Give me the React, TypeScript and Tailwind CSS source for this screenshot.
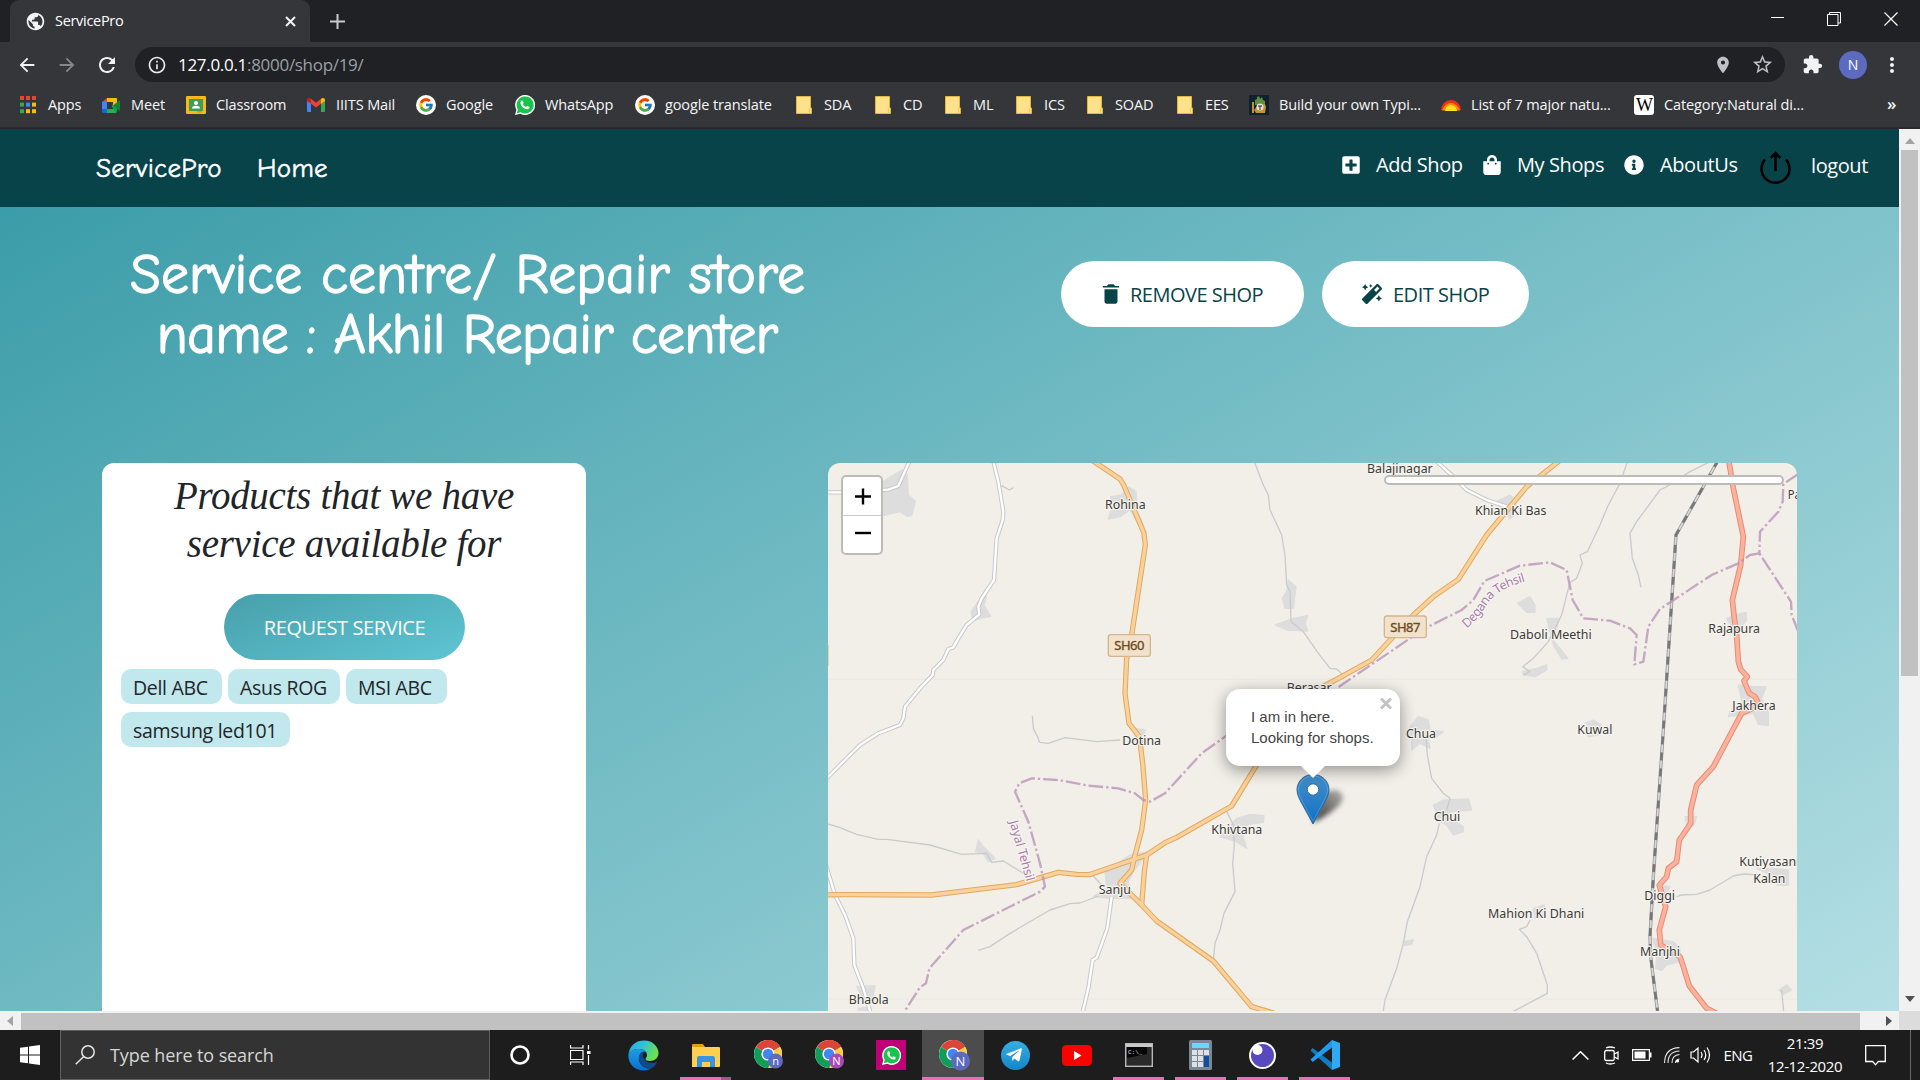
import React from "react";
import {
  MdArrowBack,
  MdArrowForward,
  MdRefresh,
  MdInfoOutline,
  MdPlace,
  MdStarBorder,
  MdExtension,
  MdMoreVert,
  MdPublic,
} from "react-icons/md";
import { FaPlusSquare, FaShoppingBag, FaInfoCircle, FaMagic, FaTelegramPlane } from "react-icons/fa";
import { IoMdTrash } from "react-icons/io";
import { FcGoogle } from "react-icons/fc";

/* ---------- Browser icons ---------- */

const AppsIcon = () => (
  <svg width="16" height="18" viewBox="0 0 16 18">
    {["#ea4335", "#ea4335", "#ea4335", "#34a853", "#4285f4", "#fbbc04", "#34a853", "#fbbc04", "#fbbc04"].map((c, i) => (
      <rect key={i} x={(i % 3) * 6} y={Math.floor(i / 3) * 6.6} width="4" height="4" fill={c} />
    ))}
  </svg>
);
const MeetIcon = () => (
  <svg width="20" height="20" viewBox="0 0 20 20">
    <path d="M1 7l5-4v4z" fill="#ea4335" />
    <path d="M6 3h9v4H6z" fill="#fbbc04" />
    <path d="M1 7h5v7H1z" fill="#4285f4" />
    <path d="M1 14h5v4H2.500q-1.500 0-1.500-1.500z" fill="#1967d2" />
    <path d="M6 14h9v4H6z" fill="#34a853" />
    <path d="M15 3q1 0 1 1v12q0 2-1 2l-4-6v-2l4-3z" fill="#00ac47" />
    <path d="M15 3q1 0 1 1v5l-4 2V7h3z" fill="#fbbc04" />
    <path d="M12 10.500l7-5.500v11z" fill="#188038" />
  </svg>
);
const ClassroomIcon = () => (
  <svg width="20" height="18" viewBox="0 0 20 18">
    <rect width="20" height="18" rx="1" fill="#f5ba15" />
    <rect x="3" y="3" width="14" height="12" fill="#3f9c5a" />
    <circle cx="10" cy="7" r="2" fill="#fff" />
    <path d="M6 12.500q0-2.700 4-2.700t4 2.700z" fill="#fff" />
    <rect x="11" y="15" width="5" height="1.500" fill="#d89c10" />
  </svg>
);
const GmailIcon = () => (
  <svg width="18" height="14" viewBox="0 0 18 14">
    <path d="M0 2v11q0 1 1 1h3V5z" fill="#4285f4" />
    <path d="M18 2v11q0 1-1 1h-3V5z" fill="#34a853" />
    <path d="M4 0.800l5 3.900 5-3.900v5L9 9.600 4 5.800z" fill="#ea4335" />
    <path d="M4 0.800v5L0 3V2q0-2 2-2 1 0 2 .8z" fill="#c5221f" />
    <path d="M14 0.800v5L18 3V2q0-2-2-2-1 0-2 .8z" fill="#fbbc04" />
  </svg>
);
const GoogleIcon = () => (
  <span className="flex size-5 items-center justify-center rounded-full bg-white">
    <FcGoogle size={16} />
  </span>
);
const WhatsAppIcon = ({ size = 20 }: { size?: number }) => (
  <svg width={size} height={size} viewBox="0 0 20 20">
    <path d="M0 20l1.400-5.200A10 10 0 1 1 5.300 18.700z" fill="#fff" />
    <path d="M1.800 18.200l1.100-3.800A8.500 8.500 0 1 1 5.700 17.200z" fill="#18c44c" />
    <path d="M6.200 5.700q.9-.9 1.500 0l.9 1.800q.1.500-.8 1.400 1.200 2.200 3.300 3.100l1.100-1.200 2.200 1.100q.5 1.300-1.200 2.200-1.800.8-4.700-1.100Q5.600 10.800 5.400 8q0-1.400.8-2.300z" fill="#fff" />
  </svg>
);
const FolderIcon = () => (
  <svg width="16" height="18" viewBox="0 0 16 18">
    <path d="M0.500 0.500h14V12h1v5.500H.5z" fill="#fde28b" stroke="#e0b93c" />
    <path d="M13.500 12.500v5" stroke="#f5c842" />
  </svg>
);
const TypingIcon = () => (
  <svg width="20" height="20" viewBox="0 0 20 20">
    <rect width="20" height="20" fill="#0d2130" />
    <path d="M6 10V5l2-1V2l2-1 1 3 2-2 1 3 2 1v4z" fill="#5d8f3c" />
    <path d="M3 7h2v11H3zM5 15l4-5 7-1 1 3-1 6H7z" fill="#c4912a" />
    <circle cx="11" cy="12" r="3.500" fill="#e8e4d8" />
    <path d="M9 11h4M11 11v4" stroke="#222" />
  </svg>
);
const SunIcon = () => (
  <svg width="20" height="12" viewBox="0 0 20 12">
    <path d="M0 11A10 10 0 0 1 20 11z" fill="#e8311e" />
    <path d="M1 11.500Q4 4 10 4t9 7.500z" fill="#ff8a00" />
    <path d="M4 12Q5 6 10 6t6 6z" fill="#ffe11a" />
  </svg>
);
const WikiIcon = () => (
  <span className="flex size-5 items-center justify-center rounded-[3px] bg-white font-['Liberation_Serif',serif] text-[18px] leading-none tracking-tighter text-black">
    W
  </span>
);

const bookmarks: { label: string; icon: React.ReactNode; box: string; text?: string }[] = [
  { label: "Apps", icon: <AppsIcon />, box: "w-[83px]" },
  { label: "Meet", icon: <MeetIcon />, box: "w-[85px]" },
  { label: "Classroom", icon: <ClassroomIcon />, box: "w-[120px]" },
  { label: "IIITS Mail", icon: <GmailIcon />, box: "w-[110px]" },
  { label: "Google", icon: <GoogleIcon />, box: "w-[99px]" },
  { label: "WhatsApp", icon: <WhatsAppIcon />, box: "w-[120px]" },
  { label: "google translate", icon: <GoogleIcon />, box: "w-[159px]" },
  { label: "SDA", icon: <FolderIcon />, box: "w-[79px]" },
  { label: "CD", icon: <FolderIcon />, box: "w-[70px]" },
  { label: "ML", icon: <FolderIcon />, box: "w-[71px]" },
  { label: "ICS", icon: <FolderIcon />, box: "w-[71px]" },
  { label: "SOAD", icon: <FolderIcon />, box: "w-[90px]" },
  { label: "EES", icon: <FolderIcon />, box: "w-[74px]" },
  { label: "Build your own Typi...", icon: <TypingIcon />, box: "w-[192px]" },
  { label: "List of 7 major natu...", icon: <SunIcon />, box: "w-[193px]" },
  { label: "Category:Natural di...", icon: <WikiIcon />, box: "w-[253px]" },
];

function TabStrip() {
  return (
    <div className="flex h-[42px] items-stretch bg-[#202124] pl-[10px]">
      <div className="flex w-[300px] items-center rounded-t-[9px] bg-[#35363a] pl-4 pr-[14px]">
        <MdPublic className="-ml-px size-[21px] text-[#f1f3f4]" />
        <span className="ml-[9px] flex-1 text-[14.5px] tracking-[-0.3px] text-white">ServicePro</span>
        <svg width="11" height="11" viewBox="0 0 11 11" stroke="#f1f3f4" strokeWidth="2">
          <path d="M1 1l9 9M10 1l-9 9" />
        </svg>
      </div>
      <div className="flex flex-1 items-center pl-5">
        <svg width="15" height="15" viewBox="0 0 15 15" stroke="#c8cacd" strokeWidth="2">
          <path d="M7.500 0v15M0 7.500h15" />
        </svg>
      </div>
      <div className="flex items-center gap-[43px] pb-[5px] pr-[22px]">
        <svg width="13" height="13" viewBox="0 0 13 13" stroke="#fff">
          <path d="M0 5.500h13" />
        </svg>
        <svg width="14" height="14" viewBox="0 0 14 14" stroke="#fff" fill="none">
          <path d="M.5 2.500h10.500v11H.5zM2.500 2.500v-2h11v10.500h-2.500" />
        </svg>
        <svg width="14" height="14" viewBox="0 0 14 14" stroke="#fff" strokeWidth="1.200">
          <path d="M.5.5l13 13M13.500.5l-13 13" />
        </svg>
      </div>
    </div>
  );
}

function Toolbar() {
  return (
    <div className="flex h-[45px] items-center bg-[#35363a] pl-[16px]">
      <MdArrowBack className="size-[22px] text-[#f1f3f4]" />
      <MdArrowForward className="ml-[18px] size-[22px] text-[#85878a]" />
      <MdRefresh className="ml-[17px] size-[24px] text-[#f1f3f4]" />
      <div className="ml-[16px] flex h-[35px] w-[1650px] items-center rounded-full bg-[#202124] pl-3">
        <MdInfoOutline className="size-5 text-[#e8eaed]" />
        <span className="ml-[11px] flex-1 text-[17px] tracking-[-0.3px] text-[#9aa0a6]">
          <span className="text-white">127.0.0.1</span>:8000/shop/19/
        </span>
        <MdPlace className="size-[20px] text-[#bdc1c6]" />
        <MdStarBorder className="ml-[18px] mr-[11px] size-[23px] text-[#bdc1c6]" />
      </div>
      <MdExtension className="ml-[17px] size-[21px] text-[#f1f3f4]" />
      <span className="ml-[16px] flex size-7 items-center justify-center rounded-full bg-[#5c6bc0] text-[14px] text-white">N</span>
      <MdMoreVert className="ml-[13px] size-[24px] text-[#f1f3f4]" />
    </div>
  );
}

function BookmarksBar() {
  return (
    <div className="flex h-[42px] items-center border-b-2 border-[#29292c] bg-[#35363a] pb-[4px] pl-[18px] text-[14.5px] tracking-[-0.12px] text-[#f5f6f7]">
      {bookmarks.map((b) => (
        <div key={b.label} className={`flex shrink-0 items-center gap-[10px] whitespace-nowrap ${b.box}`}>
          <span className="flex w-5 justify-center">{b.icon}</span>
          <span>{b.label}</span>
        </div>
      ))}
      <span className="pb-1 text-[17px] font-semibold leading-none">»</span>
    </div>
  );
}

/* ---------- Page ---------- */

const comic = "font-['Comic_Neue','Comic_Sans_MS','Lato',sans-serif]";

function NavBar() {
  return (
    <div className="flex h-[78px] items-center bg-[#074349] text-white">
      <div
        className={`flex flex-1 items-center pl-[96px] pt-[3px] text-[27px] tracking-[0.3px] [-webkit-text-stroke:0.5px_white] ${comic}`}
      >
        <span className="w-[161px]">ServicePro</span>
        <span>Home</span>
      </div>
      <div className="flex items-center pb-[6px] text-[20px] tracking-[-0.4px]">
        <FaPlusSquare className="size-[20px]" />
        <span className="ml-[15px] w-[106px] whitespace-nowrap">Add Shop</span>
        <FaShoppingBag className="size-[20px]" />
        <span className="ml-[15px] w-[107px] whitespace-nowrap">My Shops</span>
        <FaInfoCircle className="size-[20px]" />
        <span className="ml-[16px] w-[99px]">AboutUs</span>
        <svg className="mt-[6px]" width="33" height="34" viewBox="0 0 33 34" fill="none" stroke="#000" strokeWidth="2.600">
          <path d="M6 8.500a14 14 0 1 0 21 0M16.500 20V3M11.500 7l5-5 5 5" />
        </svg>
        <span className="ml-[19px] w-[88px] pt-[2px]">logout</span>
      </div>
    </div>
  );
}

function ShopHeader() {
  return (
    <div className="flex h-[256px] text-white">
      <h1
        className={`ml-[130px] w-[674px] whitespace-nowrap pt-[38px] text-center text-[56px] leading-[60px] [-webkit-text-stroke:1.3px_white] ${comic}`}
      >
        Service centre/ Repair store
        <br />
        <span className="tracking-[-0.7px]">name : Akhil Repair center</span>
      </h1>
      <div className="ml-[257px] flex gap-[18px] pt-[54px] text-[20px] tracking-[-0.5px] text-[#074349]">
        <button className="flex h-[66px] w-[243px] items-center whitespace-nowrap rounded-[33px] bg-white pl-[37px]">
          <IoMdTrash className="size-[26px]" />
          <span className="ml-[6px] pt-[2px]">REMOVE SHOP</span>
        </button>
        <button className="flex h-[66px] w-[207px] items-center whitespace-nowrap rounded-[33px] bg-white pl-[40px]">
          <FaMagic className="size-5" />
          <span className="ml-[11px] pt-[2px]">EDIT SHOP</span>
        </button>
      </div>
    </div>
  );
}

function Products() {
  const chip = "flex h-[35px] items-center rounded-[10px] bg-[#c1e8ec] pl-[12px] pt-[2px] whitespace-nowrap";
  return (
    <div className="h-[548px] w-[484px] shrink-0 rounded-t-xl bg-white text-[#212529]">
      <h2 className="pt-[9px] text-center font-['Satisfy','Liberation_Serif',serif] text-[39px] italic leading-[48px] tracking-[-0.3px]">
        Products that we have
        <br />
        service available for
      </h2>
      <button className="ml-[122px] mt-[26px] flex h-[66px] w-[241px] items-center justify-center rounded-[33px] bg-linear-[160deg,#489fab,#5fc5d3] pt-[2px] text-[20px] tracking-[-0.4px] text-white">
        REQUEST SERVICE
      </button>
      <div className="ml-[19px] mt-[9px] flex w-[400px] flex-wrap gap-x-[6px] gap-y-[8px] text-[19.5px] tracking-[-0.3px]">
        <span className={`${chip} w-[101px]`}>Dell ABC</span>
        <span className={`${chip} w-[112px]`}>Asus ROG</span>
        <span className={`${chip} w-[101px]`}>MSI ABC</span>
        <span className={`${chip} w-[169px]`}>samsung led101</span>
      </div>
    </div>
  );
}

/* ---------- Map (drawn at three units per pixel) ---------- */

const primaryRoads = [
  "815,15 900,72 912,92 930,135 972,235 976,270 935,540 920,610 915,715 927,805 958,845 968,925 977,1035 965,1125 942,1212 935,1245 900,1285 930,1315 965,1350 1010,1398 1180,1518 1295,1655 1380,1680",
  "15,1320 70,1319 335,1320 590,1289 715,1252 770,1258 808,1259 980,1200 1035,1163 1070,1147 1235,1053 1310,930 1360,830 1470,715 1565,665 1655,615 1780,480 1840,425 1915,373 2000,240 2120,95 2225,12",
  "980,1200 973,1250 965,1350",
];
const trunkRoads = [
  "2726,15 2740,100 2770,245 2762,330 2737,435 2743,490 2750,540 2755,620 2762,643 2782,665 2772,678 2788,715 2805,725 2818,750 2765,775 2738,825 2680,935 2630,990 2612,1065 2612,1105 2578,1155 2570,1220 2545,1240 2540,1265 2518,1290 2537,1355 2518,1425 2522,1470 2580,1505 2590,1535 2608,1593 2660,1660 2700,1680",
];
const whiteRoads = [
  "15,112 68,112 205,104 235,93 270,15",
  "519,15 535,80 550,170 548,195 530,250 522,375 485,430 475,455 478,478 440,510 415,550 400,577 385,582 370,615 340,645 338,660 300,700 255,755 250,790 240,810 175,835 120,870 15,975",
  "18,1230 45,1320 75,1380 100,1450 103,1530 130,1600 152,1675",
  "875,1325 862,1420 830,1508 818,1515 805,1600 786,1680",
  "1845,15 1900,65 1940,105 2000,135 2060,155",
];
const minorRoads = [
  "1301,15 1330,90 1345,120 1350,165 1385,240 1395,300 1400,390 1410,410 1413,500 1450,530 1495,595 1530,640 1550,642 1567,658",
  "545,92 568,105 580,98",
  "637,782 640,820 655,850 658,862 685,865 735,848 830,860 900,855",
  "15,1104 60,1118 110,1138 175,1153 200,1153 330,1170 425,1198 500,1195 515,1222 550,1218 610,1255",
  "475,1486 510,1475 570,1435 690,1365 750,1346 780,1344 835,1323",
  "820,1263 845,1290",
  "1220,1070 1240,1110 1243,1170 1238,1225 1245,1310 1212,1375 1200,1425 1185,1465 1180,1515",
  "2424,15 2400,85 2365,150 2340,210 2302,290 2280,300 2287,325 2270,370 2250,382 2235,440 2225,480 2185,560 2140,610 2108,635 2130,650 2110,660",
  "2680,15 2610,50 2540,95 2520,105 2450,200 2430,235 2437,310 2455,360 2463,397",
  "1818,845 1822,900 1835,970 1870,1015 1890,1030 1880,1065",
  "1858,1105 1850,1140 1820,1205 1800,1295 1762,1400 1750,1465 1730,1540 1695,1635 1688,1680",
  "2130,1395 2120,1415 2098,1423 2120,1445 2150,1495 2182,1590 2182,1615 2060,1680",
  "2570,1325 2585,1320 2630,1318 2670,1305 2740,1263 2770,1257 2820,1260",
  "2885,1605 2892,1680",
];
const railway = "2695,15 2568,240 2530,825 2500,1265 2490,1445 2492,1505 2514,1680";
const boundaries = [
  "2935,57 2890,87 2888,140 2875,170 2820,230 2818,295",
  "2935,530 2915,480 2913,440 2818,295",
  "2818,295 2790,300 2755,325 2675,360 2520,462 2485,515 2470,620 2443,628 2450,540 2430,520 2370,497 2290,490 2258,435 2240,345 2190,322 2100,332 1993,378 1960,435 1925,465 1825,515 1770,550 1550,700",
  "1300,790 1215,845 1145,895 1035,1015 990,1040 970,1035 945,1015 895,1000 805,992 715,975 635,970 598,985 585,1010 625,1100 660,1225 675,1295 660,1310 430,1425 328,1540 318,1585 300,1597 250,1675",
];
const towns = [
  "190,80 245,45 262,60 265,120 286,138 275,182 262,184 240,170 188,182",
  "872,125 905,120 925,95 948,110 950,165 972,215 960,215 930,165 900,185 865,192 875,160",
  "485,425 500,425 492,450 512,485 480,490 458,498 453,470",
  "1405,375 1428,395 1420,460 1395,460 1387,430 1400,410",
  "1365,510 1420,490 1463,482 1455,505 1463,528 1400,525",
  "945,820 975,825 965,870 945,870",
  "2028,140 2070,120 2088,135 2080,185 2068,192 2050,165",
  "2092,445 2130,425 2145,450 2145,472 2120,472",
  "2180,490 2218,490 2210,520 2195,550 2244,610 2225,612 2200,570 2190,530",
  "2108,650 2150,640 2180,630 2180,645 2145,665 2110,660",
  "2720,490 2745,480 2778,472 2780,495 2765,515 2730,510",
  "2755,690 2800,695 2838,695 2825,730 2845,770 2845,812 2815,808 2800,775 2725,785 2730,770 2770,760",
  "1770,815 1795,785 1825,795 1830,825 1870,830 1850,845 1825,850 1830,880 1800,865 1775,885 1775,850",
  "1840,1050 1870,1035 1945,1032 1955,1065 1895,1070 1890,1090 1930,1115 1930,1130 1900,1140 1880,1110 1860,1100",
  "2295,805 2320,795 2345,810 2335,840 2305,845",
  "1250,1090 1290,1078 1332,1082 1330,1102 1285,1108 1265,1130 1280,1180 1250,1160 1200,1145",
  "475,1155 490,1175 525,1210 505,1220 490,1195 467,1190",
  "855,1250 930,1200 985,1190 940,1250 925,1280 930,1330 870,1330 820,1325 860,1300",
  "110,1595 165,1592 160,1620 145,1640 130,1640 120,1615",
  "115,1660 150,1655 160,1680 115,1680",
  "2595,1085 2630,1085 2622,1110 2600,1110",
  "2498,1450 2560,1460 2580,1480 2580,1520 2540,1530 2525,1547 2507,1540 2510,1500",
  "2810,1240 2860,1240 2905,1245 2905,1290 2870,1290 2850,1260",
  "1750,1460 1780,1455 1775,1468 1755,1472",
  "2877,1605 2900,1590 2915,1605 2890,1618",
  "2140,1360 2172,1350 2175,1385 2145,1390",
  "2510,1290 2550,1295 2540,1320 2520,1320",
];
const labels: [string, number, number, number][] = [
  ["Rohina", 855, 163, 122],
  ["Dotina", 907, 870, 116],
  ["Balajinagar", 1641, 53, 197],
  ["Khian Ki Bas", 1965, 180, 214],
  ["Daboli Meethi", 2070, 552, 245],
  ["Rajapura", 2665, 534, 155],
  ["Jakhera", 2737, 766, 130],
  ["Kuwal", 2272, 836, 105],
  ["Chua", 1758, 850, 90],
  ["Chui", 1841, 1098, 80],
  ["Mahion Ki Dhani", 2004, 1390, 289],
  ["Diggi", 2473, 1336, 92],
  ["Manjhi", 2460, 1504, 120],
  ["Kutiyasani", 2758, 1234, 180],
  ["Kalan", 2800, 1283, 96],
  ["Khivtana", 1174, 1137, 153],
  ["Sanju", 836, 1317, 97],
  ["Bhaola", 86, 1647, 120],
  ["Berasar", 1400, 712, 135],
  ["Pa", 2903, 131, 39],
];

function Shield({ x, y, label }: { x: number; y: number; label: string }) {
  return (
    <g>
      <rect x={x} y={y} width="126" height="65" rx="7" fill="#f3e2cb" stroke="#d5b58c" strokeWidth="4" />
      <text x={x + 18} y={y + 47} textLength="90" fontSize="39" fill="#6b4a1d" stroke="#6b4a1d">
        {label}
      </text>
    </g>
  );
}

function MapCanvas() {
  return (
    <svg
      className="block font-['Noto_Sans','Open_Sans',sans-serif]"
      width="969"
      height="548"
      viewBox="24 24 2907 1644"
      fill="none"
      strokeLinejoin="round"
    >
      <rect x="24" y="24" width="2907" height="1644" fill="#f2efe9" />
      <path d="M24 673H2931M24 1632H2931" stroke="#e9e6e1" strokeWidth="2" />
      {towns.map((p) => (
        <polygon key={p} points={p} fill="#dddddd" stroke="#dddddd" strokeWidth="4" />
      ))}
      {minorRoads.map((p) => (
        <polyline key={p} points={p} stroke="#c9cbcc" strokeWidth="4" />
      ))}
      {whiteRoads.map((p) => (
        <polyline key={p} points={p} stroke="#c8c8c8" strokeWidth="13" />
      ))}
      {whiteRoads.map((p) => (
        <polyline key={p} points={p} stroke="#ffffff" strokeWidth="7" />
      ))}
      {primaryRoads.map((p) => (
        <polyline key={p} points={p} stroke="#dfa95c" strokeWidth="16" />
      ))}
      {primaryRoads.map((p) => (
        <polyline key={p} points={p} stroke="#fad19c" strokeWidth="10" />
      ))}
      {trunkRoads.map((p) => (
        <polyline key={p} points={p} stroke="#ea8a74" strokeWidth="17" />
      ))}
      {trunkRoads.map((p) => (
        <polyline key={p} points={p} stroke="#f9b29c" strokeWidth="11" />
      ))}
      <polyline points={railway} stroke="#9a9a9a" strokeWidth="10" />
      <polyline points={railway} stroke="#d8d8d6" strokeWidth="5" />
      <polyline points={railway} stroke="#777777" strokeWidth="8" strokeDasharray="24 24" />
      {boundaries.map((p) => (
        <polyline key={p} points={p} stroke="#b993b9" strokeOpacity="0.8" strokeWidth="7" strokeDasharray="44 9 7 9" />
      ))}
      <rect x="10" y="570" width="17" height="62" fill="#e8cfae" />
      <Shield x={865} y={539} label="SH60" />
      <Shield x={1693} y={483} label="SH87" />
      <path id="degana" d="M1940 520Q1968 500 2000 450Q2030 402 2120 378" />
      <path id="jayal" d="M568 1100L622 1290" />
      <g fontSize="38" stroke="#f7f5f1" strokeWidth="7" paintOrder="stroke" fill="#a97da9">
        <text>
          <textPath href="#degana" textLength="232">
            Degana Tehsil
          </textPath>
        </text>
        <text>
          <textPath href="#jayal" textLength="188">
            Jayal Tehsil
          </textPath>
        </text>
      </g>
      <g fontSize="40" fill="#3a3a3a" stroke="#f6f4ef" strokeWidth="7" paintOrder="stroke">
        {labels.map(([name, x, y, w]) => (
          <text key={name} x={x} y={y} textLength={w} lengthAdjust="spacingAndGlyphs">
            {name}
          </text>
        ))}
      </g>
    </svg>
  );
}

function MapPanel() {
  return (
    <div className="relative h-[548px] w-[969px] shrink-0 overflow-hidden rounded-t-xl">
      <MapCanvas />
      <div className="absolute left-[13px] top-[12px] flex h-[80px] w-[42px] flex-col rounded-[5px] border-2 border-[#bdbbb6] bg-white pl-[2px]">
        {["M0 9.500h16M8 1.500v16", "M0 8h16"].map((d, i) => (
          <span key={d} className={`-ml-[2px] flex flex-1 items-center justify-center pl-[2px] ${i === 0 ? "border-b border-[#cccccc]" : ""}`}>
            <svg width="16" height="18" viewBox="0 0 16 18" stroke="#000" strokeWidth="2.400">
              <path d={d} />
            </svg>
          </span>
        ))}
      </div>
      <div className="absolute left-[556px] top-[12px] h-[10px] w-[400px] rounded-[5px] border-2 border-[#bdbbb6] bg-white" />

      {/* marker */}
      <svg className="absolute left-[460px] top-[306px]" width="80" height="60" viewBox="0 0 80 60">
        <defs>
          <linearGradient id="pin" x1="0" y1="0" x2="0" y2="1">
            <stop offset="0" stopColor="#4390c9" />
            <stop offset="1" stopColor="#126fc6" />
          </linearGradient>
          <linearGradient id="shade" x1="0" y1="1" x2="1" y2="0">
            <stop offset="0" stopColor="#000" stopOpacity="0.8" />
            <stop offset="1" stopColor="#000" stopOpacity="0.25" />
          </linearGradient>
          <filter id="soft" x="-50%" y="-50%" width="200%" height="200%">
            <feGaussianBlur stdDeviation="2.500" />
          </filter>
        </defs>
        <path d="M25 54L36 25Q50 16 55 27Q56 38 25 54z" fill="url(#shade)" filter="url(#soft)" />
        <path d="M25 5.500C16 5.500 9 12 9 21c0 4 2 8 4 12l12 22 12-22c2-4 4-8 4-12C41 12 34 5.500 25 5.500z" fill="url(#pin)" stroke="#2e6c97" />
        <path d="M25 7C17 7 10.500 13 10.500 21c0 4 2 7.500 4 11.500L25 52l10.500-19.500c2-4 4-7.500 4-11.500C39.500 13 33 7 25 7z" fill="none" stroke="#fff" strokeOpacity="0.18" />
        <circle cx="25" cy="20.500" r="5.700" fill="#fff" stroke="#2e6c97" />
      </svg>

      {/* popup */}
      <div className="absolute left-[398px] top-[226px] h-[77px] w-[174px] rounded-[14px] bg-white pl-[25px] pt-[17px] font-['Liberation_Sans',Arial,sans-serif] text-[15px] leading-[21px] text-[#444444] shadow-[0_4px_16px_rgba(0,0,0,0.4)]">
        <p>I am in here.</p>
        <p className="whitespace-nowrap">Looking for shops.</p>
        <svg className="absolute right-[8px] top-[9px]" width="12" height="11" viewBox="0 0 12 11" stroke="#c3c3c3" strokeWidth="3">
          <path d="M1 .5l10 10M11 .5l-10 10" />
        </svg>
        <svg className="absolute left-[74px] top-[76px]" width="26" height="13" viewBox="0 0 26 13">
          <path d="M0 0h26L13 13z" fill="#fff" />
        </svg>
      </div>
    </div>
  );
}

function Page() {
  return (
    <div className="flex h-[901px]">
      <div className="flex w-[1899px] flex-col">
        <NavBar />
        <div className="h-[804px] overflow-hidden bg-linear-[150deg,#3b9da9,#b4dfe4]">
          <ShopHeader />
          <div className="flex gap-[242px] pl-[102px]">
            <Products />
            <MapPanel />
          </div>
        </div>
        <div className="flex h-[19px] items-center bg-[#f1f1f1]">
          <svg className="ml-[7px] mr-[8px]" width="6" height="10" viewBox="0 0 6 10">
            <path d="M6 0v10L0 5z" fill="#a3a3a3" />
          </svg>
          <div className="mt-[2px] h-[17px] w-[1839px] bg-[#c1c1c1]" />
          <svg className="ml-[26px]" width="6" height="10" viewBox="0 0 6 10">
            <path d="M0 0v10l6-5z" fill="#505050" />
          </svg>
        </div>
      </div>
      <div className="flex w-[21px] flex-col items-center bg-[#f1f1f1]">
        <svg className="mt-[9px]" width="10" height="6" viewBox="0 0 10 6">
          <path d="M0 6h10L5 0z" fill="#a3a3a3" />
        </svg>
        <div className="mt-[6px] h-[526px] w-[17px] bg-[#c1c1c1]" />
        <div className="flex-1" />
        <svg className="mb-[9px]" width="10" height="6" viewBox="0 0 10 6">
          <path d="M0 0h10L5 6z" fill="#505050" />
        </svg>
        <div className="h-[19px] w-full bg-[#dcdcdc]" />
      </div>
    </div>
  );
}

/* ---------- Taskbar ---------- */

function ChromeIcon({ badge, color, big }: { badge: string; color: string; big?: boolean }) {
  return (
    <svg className={big ? "ml-[4px]" : "ml-[4px]"} width="34" height="32" viewBox="0 0 34 32">
      <circle cx="15" cy="15" r="14" fill="#fff" />
      <path d="M15 15L2.900 8A14 14 0 0 1 27.100 8z" fill="#db4437" />
      <path d="M15 1a14 14 0 0 1 12.100 7H15z" fill="#db4437" />
      <path d="M15 15L27.100 8A14 14 0 0 1 15 29z" fill="#ffcd40" />
      <path d="M15 15L2.900 8A14 14 0 0 0 15 29l6-11z" fill="#0f9d58" />
      <circle cx="15" cy="15" r="6.600" fill="#fff" />
      <circle cx="15" cy="15" r="5.200" fill="#4285f4" />
      <circle cx="22.500" cy="22" r={big ? 9.500 : 7.500} fill={color} />
      <text x="22.500" y={big ? 26.5 : 26} textAnchor="middle" fontSize={big ? 13 : 11} fill="#fff" fontFamily="Open Sans">
        {badge}
      </text>
    </svg>
  );
}
const EdgeIcon = () => (
  <svg width="31" height="31" viewBox="0 0 31 31">
    <defs>
      <linearGradient id="edgeA" x1="0" y1="0" x2="1" y2="0.400">
        <stop offset="0" stopColor="#2aa9e0" />
        <stop offset="0.500" stopColor="#2fc3d8" />
        <stop offset="1" stopColor="#6ee04c" />
      </linearGradient>
      <linearGradient id="edgeB" x1="0" y1="0" x2="0" y2="1">
        <stop offset="0" stopColor="#1b9de2" />
        <stop offset="1" stopColor="#0a6fd0" />
      </linearGradient>
    </defs>
    <path d="M.5 14C2 5 8 .5 16 .5 25 .500 30.500 7 30.500 13c0 5-4 8-8.500 8-3 0-4.500-1-4.500-2s1.500-1.500 1.500-4c0-3-3-6-8-6C6 9 2 11 .5 14z" fill="url(#edgeA)" />
    <path d="M.5 14C2 10.500 6 9 11 9c3 0 5 1 6.500 2.500-5 0-7 4-6.500 8 .6 6 6 9.500 12 9-2.500 1.500-5 2-7.500 2C6 30.500-.500 23 .5 14z" fill="url(#edgeB)" />
    <path d="M11 19.500c-.5-3 .5-6 3-7.500 1-.500 1.800 0 1.500.500C13.500 18 18 23 24 23c2 0 3.500-.700 4.500-1 .5 0 .7.200.4.700-1.400 2.600-3.500 4.500-5.900 5.800-6 .5-11.400-3-12-9z" fill="#114a8b" />
  </svg>
);
const ExplorerIcon = () => (
  <svg width="28" height="23" viewBox="0 0 28 23">
    <path d="M0 1q0-1 1-1h10l2 3H0z" fill="#e59e0a" />
    <path d="M0 3h27q1 0 1 1v18q0 1-1 1H0z" fill="#ffcf4f" />
    <path d="M5 23V14q0-2 2-2h14q2 0 2 2v9h-5v-5h-8v5z" fill="#3695e0" />
  </svg>
);
const TerminalIcon = () => (
  <svg width="28" height="24" viewBox="0 0 28 24">
    <rect x=".75" y=".75" width="26.500" height="22.500" fill="#060606" stroke="#b9b9b9" strokeWidth="1.500" />
    <rect x="1" y="1" width="26" height="3" fill="#c9c9c9" />
    <path d="M2 22V15l20-4V4h4v18z" fill="#2a2a2a" />
    <text x="3" y="11" fontSize="6" fill="#ddd" fontFamily="Liberation Mono">
      C:\_
    </text>
  </svg>
);
const CalcIcon = () => (
  <svg width="23" height="30" viewBox="0 0 23 30">
    <rect width="23" height="30" rx="1.500" fill="#7b8794" />
    <rect x="3" y="3" width="17" height="5" fill="#5fdcff" />
    {[0, 1, 2, 3, 4, 5, 6, 7].map((i) => {
      const col = i < 6 ? i % 3 : i - 6;
      const row = i < 6 ? Math.floor(i / 3) : 2;
      return <rect key={i} x={3 + col * 6} y={10 + row * 6} width="5" height="5" fill="#dde1e5" />;
    })}
    <rect x="15" y="16" width="5" height="11" fill="#12509e" />
  </svg>
);
const CodeIcon = () => (
  <svg width="30" height="30" viewBox="0 0 30 30">
    <path d="M22 0v22.500L2.500 8 .5 10.500 22 30l1-2z" fill="#0f7cc4" />
    <path d="M22 7.500L2.500 22 .5 19.500 22 0z" fill="#1f9cf0" />
    <path d="M22 0l8 3v24l-8 3z" fill="#2fa9f2" />
  </svg>
);

const apps: { name: string; icon: React.ReactNode; line?: boolean; active?: boolean; split?: boolean }[] = [
  {
    name: "cortana",
    icon: (
      <svg width="20" height="20" viewBox="0 0 20 20">
        <circle cx="10" cy="10" r="8.500" fill="none" stroke="#fff" strokeWidth="2.600" />
      </svg>
    ),
  },
  {
    name: "tasks",
    icon: (
      <svg className="mr-[3px]" width="21" height="20" viewBox="0 0 21 20" fill="none" stroke="#fff" strokeWidth="1.200">
        <path d="M.5 5.500h12.500v9H.5zM.5 0v3h12.500V0M.5 20v-3h12.500v3M18.500 0v4.500M18.500 10v10" />
        <path d="M17 6h3.500v3H17z" fill="#fff" stroke="none" />
      </svg>
    ),
  },
  { name: "edge", icon: <EdgeIcon /> },
  { name: "explorer", icon: <ExplorerIcon />, line: true, split: true },
  { name: "chrome1", icon: <ChromeIcon badge="n" color="#5c6bc0" /> },
  { name: "chrome2", icon: <ChromeIcon badge="N" color="#ab47bc" /> },
  {
    name: "whatsapp",
    icon: (
      <span className="flex size-[30px] items-center justify-center bg-[#bf0077]">
        <WhatsAppIcon size={19} />
      </span>
    ),
  },
  { name: "chrome3", icon: <ChromeIcon badge="N" color="#5c6bc0" big />, active: true },
  {
    name: "telegram",
    icon: (
      <span className="flex size-[29px] items-center justify-center rounded-full bg-linear-to-b from-[#37aee2] to-[#1286c8]">
        <FaTelegramPlane className="mr-[2px] size-[18px] text-white" />
      </span>
    ),
  },
  {
    name: "youtube",
    icon: (
      <svg width="30" height="21" viewBox="0 0 30 21">
        <rect width="30" height="21" rx="4.500" fill="#f00" />
        <path d="M12 6l7.500 4.500L12 15z" fill="#fff" />
      </svg>
    ),
  },
  { name: "terminal", icon: <TerminalIcon />, line: true },
  { name: "calculator", icon: <CalcIcon />, line: true },
  {
    name: "insomnia",
    icon: (
      <svg width="27" height="27" viewBox="0 0 27 27">
        <circle cx="13.500" cy="13.500" r="13.500" fill="#fff" />
        <circle cx="13.500" cy="13.500" r="11.500" fill="#5849be" />
        <circle cx="8.500" cy="8" r="5" fill="#fff" />
      </svg>
    ),
    line: true,
  },
  { name: "code", icon: <CodeIcon />, line: true },
];

function Taskbar() {
  return (
    <div className="flex h-[50px] bg-[#1d1d1d] text-white">
      <div className="flex w-[60px] items-center justify-center">
        <svg width="20" height="20" viewBox="0 0 20 20" fill="#fff">
          <path d="M0 2.800l8-1.100v7.800H0zM9 1.500L20 0v9.500H9zM0 10.500h8v7.800l-8-1.100zM9 10.500h11V20L9 18.500z" />
        </svg>
      </div>
      <div className="flex w-[430px] items-center border border-[#606060] bg-[#333333] pl-[14px]">
        <svg width="21" height="20" viewBox="0 0 21 20" fill="none" stroke="#e6e6e6" strokeWidth="1.500">
          <circle cx="13" cy="7" r="6.200" />
          <path d="M8.800 11.500L.7 19.300" />
        </svg>
        <span className="ml-[14px] text-[18px] tracking-[-0.1px] text-[#d6d6d6]">Type here to search</span>
      </div>
      <div className="-ml-px flex">
        {apps.map((a) => (
          <div
            key={a.name}
            className={`flex w-[61.9px] shrink-0 flex-col items-center ${a.active ? "bg-[#4c4c4c]" : ""}`}
          >
            <div className="flex h-[47px] items-center justify-center pt-[3px]">{a.icon}</div>
            {a.active && <div className="h-[3px] w-full bg-[#e76fb6]" />}
            {a.line && (
              <div className="flex h-[3px] w-[51px] bg-[#e76fb6]">
                {a.split && <div className="ml-auto w-[10px] bg-[#a8538a]" />}
              </div>
            )}
          </div>
        ))}
      </div>
      <div className="flex flex-1 items-center pl-[217px]">
        <svg width="17" height="9" viewBox="0 0 17 9" fill="none" stroke="#fff" strokeWidth="1.500">
          <path d="M.6 8.500l7.900-7.800 7.900 7.800" />
        </svg>
        <svg className="ml-[15px]" width="15" height="19" viewBox="0 0 15 19" fill="none" stroke="#fff" strokeWidth="1.300">
          <rect x=".7" y="4.500" width="9.500" height="10" rx="1.500" />
          <path d="M10.500 8l3.500-2v7l-3.500-2M2 2q4-2 9 0M2 17q4 2 9 0" />
        </svg>
        <svg className="ml-[13px]" width="20" height="12" viewBox="0 0 20 12">
          <path d="M.6.600h16.800v10.800H.6z" fill="none" stroke="#fff" strokeWidth="1.200" />
          <path d="M2.500 2.500h11v7h-11zM18 3.500h1.500v5H18z" fill="#fff" />
        </svg>
        <svg className="ml-[12px]" width="16" height="16" viewBox="0 0 16 16" fill="none" stroke="#e8e8e8" strokeWidth="1.100">
          <path d="M.6 16Q.6 1 15.500.6M4 16Q4 4.500 15.500 4M8 16Q8 8 15.500 7.500M11.500 16q0-3.500 4-4" />
          <circle cx="13.500" cy="14" r="1.600" fill="#fff" stroke="none" />
        </svg>
        <svg className="ml-[10px]" width="22" height="18" viewBox="0 0 22 18" fill="none" stroke="#fff" strokeWidth="1.200">
          <path d="M1 6h2.500L8 2v14l-4.500-4H1zM11 6q2 3 0 6M14 4q3.500 5 0 10M17 1.500q5 7.500 0 15" />
        </svg>
        <span className="ml-[11px] w-[44px] text-[15px] tracking-[-0.5px]">ENG</span>
        <div className="flex w-[75px] flex-col items-center whitespace-nowrap text-[15px] leading-[23px] tracking-[-0.4px]">
          <span>21:39</span>
          <span>12-12-2020</span>
        </div>
        <svg className="ml-[23px]" width="21" height="21" viewBox="0 0 21 21" fill="none" stroke="#fff" strokeWidth="1.300">
          <path d="M.7.700h19.600v15.800h-7L10.500 19.800l-2.800-3.300h-7z" />
        </svg>
        <div className="ml-[24px] h-full w-px bg-[#6a6a6a]" />
      </div>
    </div>
  );
}

export default function App() {
  return (
    <div className="h-[1080px] w-[1920px] overflow-hidden font-['Segoe_UI','Open_Sans',sans-serif]">
      <TabStrip />
      <Toolbar />
      <BookmarksBar />
      <Page />
      <Taskbar />
    </div>
  );
}
